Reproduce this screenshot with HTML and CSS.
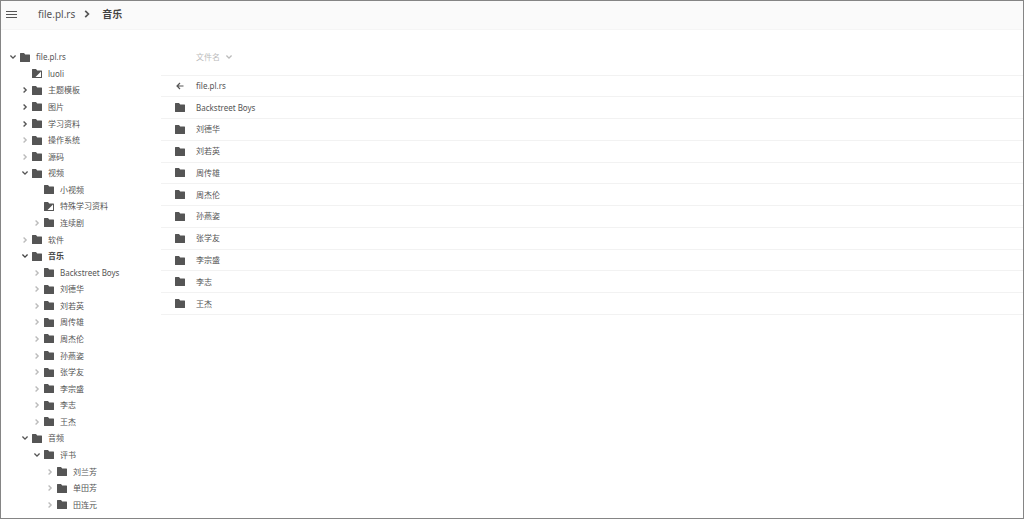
FILE: index.html
```
<!DOCTYPE html>
<html lang="zh-CN">
<head>
  <meta charset="UTF-8" />
  <meta name="viewport" content="width=device-width, initial-scale=1.0" />
  <title>音乐 - file.pl.rs</title>
  <link rel="stylesheet" href="styles.css">
</head>
<body>
  <!-- Icons -->
  <svg class="sprite" aria-hidden="true">
    <symbol id="folder" viewBox="0 0 20 18">
      <path d="M1 0h7l2.5 3H19q1 0 1 1v13q0 1-1 1H1q-1 0-1-1V1q0-1 1-1z" />
    </symbol>
    <symbol id="folder-page" viewBox="0 0 20 18">
      <path fill-rule="evenodd" d="M1 0h7l2.5 3H19q1 0 1 1v13q0 1-1 1H1q-1 0-1-1V1q0-1 1-1zM18 5L7 16h11z" />
    </symbol>
    <symbol id="chevron" viewBox="0 0 14 14">
      <path d="M4.5 2.5L9 7l-4.5 4.5" fill="none" stroke="currentColor" stroke-width="2.4" />
    </symbol>
    <symbol id="back" viewBox="0 0 16 16">
      <path d="M15 8H2M8 2L2 8l6 6" fill="none" stroke="currentColor" stroke-width="2.4" />
    </symbol>
  </svg>

  <!-- Header -->
  <header class="topbar">
    <button class="menu-btn" type="button" aria-label="Menu"><span></span><span></span><span></span></button>
    <nav class="crumbs">
      <a href="#">file.pl.rs</a>
      <svg class="crumb-sep"><use href="#chevron" /></svg>
      <a class="current" href="#">音乐</a>
    </nav>
  </header>

  <main class="content">
    <!-- Folder tree -->
    <nav class="tree">
      <a class="node open" href="#"><svg class="arrow"><use href="#chevron" /></svg><svg class="icon"><use href="#folder" /></svg>file.pl.rs</a>
      <a class="node level-1 leaf" href="#"><svg class="arrow"><use href="#chevron" /></svg><svg class="icon"><use href="#folder-page" /></svg>luoli</a>
      <a class="node level-1" href="#"><svg class="arrow"><use href="#chevron" /></svg><svg class="icon"><use href="#folder" /></svg>主题模板</a>
      <a class="node level-1" href="#"><svg class="arrow"><use href="#chevron" /></svg><svg class="icon"><use href="#folder" /></svg>图片</a>
      <a class="node level-1" href="#"><svg class="arrow"><use href="#chevron" /></svg><svg class="icon"><use href="#folder" /></svg>学习资料</a>
      <a class="node level-1 unread" href="#"><svg class="arrow"><use href="#chevron" /></svg><svg class="icon"><use href="#folder" /></svg>操作系统</a>
      <a class="node level-1 unread" href="#"><svg class="arrow"><use href="#chevron" /></svg><svg class="icon"><use href="#folder" /></svg>源码</a>
      <a class="node level-1 open" href="#"><svg class="arrow"><use href="#chevron" /></svg><svg class="icon"><use href="#folder" /></svg>视频</a>
      <a class="node level-2 leaf" href="#"><svg class="arrow"><use href="#chevron" /></svg><svg class="icon"><use href="#folder" /></svg>小视频</a>
      <a class="node level-2 leaf" href="#"><svg class="arrow"><use href="#chevron" /></svg><svg class="icon"><use href="#folder-page" /></svg>特殊学习资料</a>
      <a class="node level-2 unread" href="#"><svg class="arrow"><use href="#chevron" /></svg><svg class="icon"><use href="#folder" /></svg>连续剧</a>
      <a class="node level-1 unread" href="#"><svg class="arrow"><use href="#chevron" /></svg><svg class="icon"><use href="#folder" /></svg>软件</a>
      <a class="node level-1 open active" href="#"><svg class="arrow"><use href="#chevron" /></svg><svg class="icon"><use href="#folder" /></svg>音乐</a>
      <a class="node level-2 unread" href="#"><svg class="arrow"><use href="#chevron" /></svg><svg class="icon"><use href="#folder" /></svg>Backstreet Boys</a>
      <a class="node level-2 unread" href="#"><svg class="arrow"><use href="#chevron" /></svg><svg class="icon"><use href="#folder" /></svg>刘德华</a>
      <a class="node level-2 unread" href="#"><svg class="arrow"><use href="#chevron" /></svg><svg class="icon"><use href="#folder" /></svg>刘若英</a>
      <a class="node level-2 unread" href="#"><svg class="arrow"><use href="#chevron" /></svg><svg class="icon"><use href="#folder" /></svg>周传雄</a>
      <a class="node level-2 unread" href="#"><svg class="arrow"><use href="#chevron" /></svg><svg class="icon"><use href="#folder" /></svg>周杰伦</a>
      <a class="node level-2 unread" href="#"><svg class="arrow"><use href="#chevron" /></svg><svg class="icon"><use href="#folder" /></svg>孙燕姿</a>
      <a class="node level-2 unread" href="#"><svg class="arrow"><use href="#chevron" /></svg><svg class="icon"><use href="#folder" /></svg>张学友</a>
      <a class="node level-2 unread" href="#"><svg class="arrow"><use href="#chevron" /></svg><svg class="icon"><use href="#folder" /></svg>李宗盛</a>
      <a class="node level-2 unread" href="#"><svg class="arrow"><use href="#chevron" /></svg><svg class="icon"><use href="#folder" /></svg>李志</a>
      <a class="node level-2 unread" href="#"><svg class="arrow"><use href="#chevron" /></svg><svg class="icon"><use href="#folder" /></svg>王杰</a>
      <a class="node level-1 open" href="#"><svg class="arrow"><use href="#chevron" /></svg><svg class="icon"><use href="#folder" /></svg>音频</a>
      <a class="node level-2 open" href="#"><svg class="arrow"><use href="#chevron" /></svg><svg class="icon"><use href="#folder" /></svg>评书</a>
      <a class="node level-3 unread" href="#"><svg class="arrow"><use href="#chevron" /></svg><svg class="icon"><use href="#folder" /></svg>刘兰芳</a>
      <a class="node level-3 unread" href="#"><svg class="arrow"><use href="#chevron" /></svg><svg class="icon"><use href="#folder" /></svg>单田芳</a>
      <a class="node level-3 unread" href="#"><svg class="arrow"><use href="#chevron" /></svg><svg class="icon"><use href="#folder" /></svg>田连元</a>
    </nav>

    <!-- File list -->
    <section class="files">
      <table class="file-table">
        <thead>
          <tr><th><button class="sort-btn" type="button">文件名<svg class="arrow"><use href="#chevron" /></svg></button></th></tr>
        </thead>
        <tbody>
          <tr><td><a href="#"><svg class="back"><use href="#back" /></svg>file.pl.rs</a></td></tr>
          <tr><td><a href="#"><svg class="icon"><use href="#folder" /></svg>Backstreet Boys</a></td></tr>
          <tr><td><a href="#"><svg class="icon"><use href="#folder" /></svg>刘德华</a></td></tr>
          <tr><td><a href="#"><svg class="icon"><use href="#folder" /></svg>刘若英</a></td></tr>
          <tr><td><a href="#"><svg class="icon"><use href="#folder" /></svg>周传雄</a></td></tr>
          <tr><td><a href="#"><svg class="icon"><use href="#folder" /></svg>周杰伦</a></td></tr>
          <tr><td><a href="#"><svg class="icon"><use href="#folder" /></svg>孙燕姿</a></td></tr>
          <tr><td><a href="#"><svg class="icon"><use href="#folder" /></svg>张学友</a></td></tr>
          <tr><td><a href="#"><svg class="icon"><use href="#folder" /></svg>李宗盛</a></td></tr>
          <tr><td><a href="#"><svg class="icon"><use href="#folder" /></svg>李志</a></td></tr>
          <tr><td><a href="#"><svg class="icon"><use href="#folder" /></svg>王杰</a></td></tr>
        </tbody>
      </table>
    </section>
  </main>
</body>
</html>
```
FILE: styles.css
```
* {
  box-sizing: border-box;
}
body {
  margin: 0;
  min-height: 100vh;
  display: flex;
  flex-direction: column;
  border: 1px solid #858585;
  background: #fff;
  color: #555;
  font-family: "Noto Sans", "Noto Sans CJK SC", sans-serif;
  font-size: 8px;
  line-height: 12px;
}
a {
  color: inherit;
  text-decoration: none;
}
button {
  padding: 0;
  border: none;
  background: none;
  color: inherit;
  font: inherit;
  cursor: pointer;
}
.sprite {
  display: none;
}
.topbar {
  display: flex;
  align-items: center;
  gap: 21px;
  height: 29px;
  padding: 0 5px 2px;
  background: #fafafa;
  border-bottom: 1px solid #f5f5f5;
}
.menu-btn {
  display: flex;
  flex-direction: column;
  gap: 2px;
  width: 11px;
}
.menu-btn span {
  height: 1px;
  background: #555;
}
.crumbs {
  display: flex;
  align-items: center;
  gap: 7px;
  font-size: 10px;
}
.crumb-sep {
  width: 10px;
  height: 10px;
  margin-right: 3px;
}
.current {
  color: #444;
  font-weight: bold;
}
.content {
  flex: 1;
  display: flex;
}
.tree {
  display: grid;
  grid-auto-rows: 1fr;
  width: 160px;
  padding: 19px 0 5px 8px;
}
.node {
  display: flex;
  align-items: center;
  min-height: 16px;
}
.arrow {
  width: 8px;
  height: 8px;
  margin-right: 3px;
}
.icon {
  width: 10px;
  height: 9px;
  margin-right: 6px;
  fill: #555;
}
.open .arrow,
.sort-btn .arrow {
  transform: rotate(90deg);
}
.leaf .arrow {
  visibility: hidden;
}
.unread .arrow {
  color: #bbb;
}
.level-1 {
  padding-left: 12px;
}
.level-2 {
  padding-left: 24px;
}
.level-3 {
  padding-left: 37px;
}
.active {
  color: #444;
  font-weight: bold;
}
.files {
  flex: 1;
  padding-top: 10px;
}
.file-table {
  width: 100%;
  height: 275px;
  border-collapse: collapse;
}
.file-table th {
  height: 35px;
  padding: 0 0 0 35px;
  text-align: left;
  font-weight: normal;
  color: #bbb;
}
.file-table tr {
  border-bottom: 1px solid #f2f2f2;
}
.file-table td {
  padding: 0 14px;
}
.file-table a {
  display: flex;
  align-items: center;
}
.file-table .icon {
  margin-right: 11px;
}
.back {
  width: 8px;
  height: 8px;
  margin: 0 12px 0 1px;
}
.sort-btn {
  display: flex;
  align-items: center;
  gap: 5px;
}
```
